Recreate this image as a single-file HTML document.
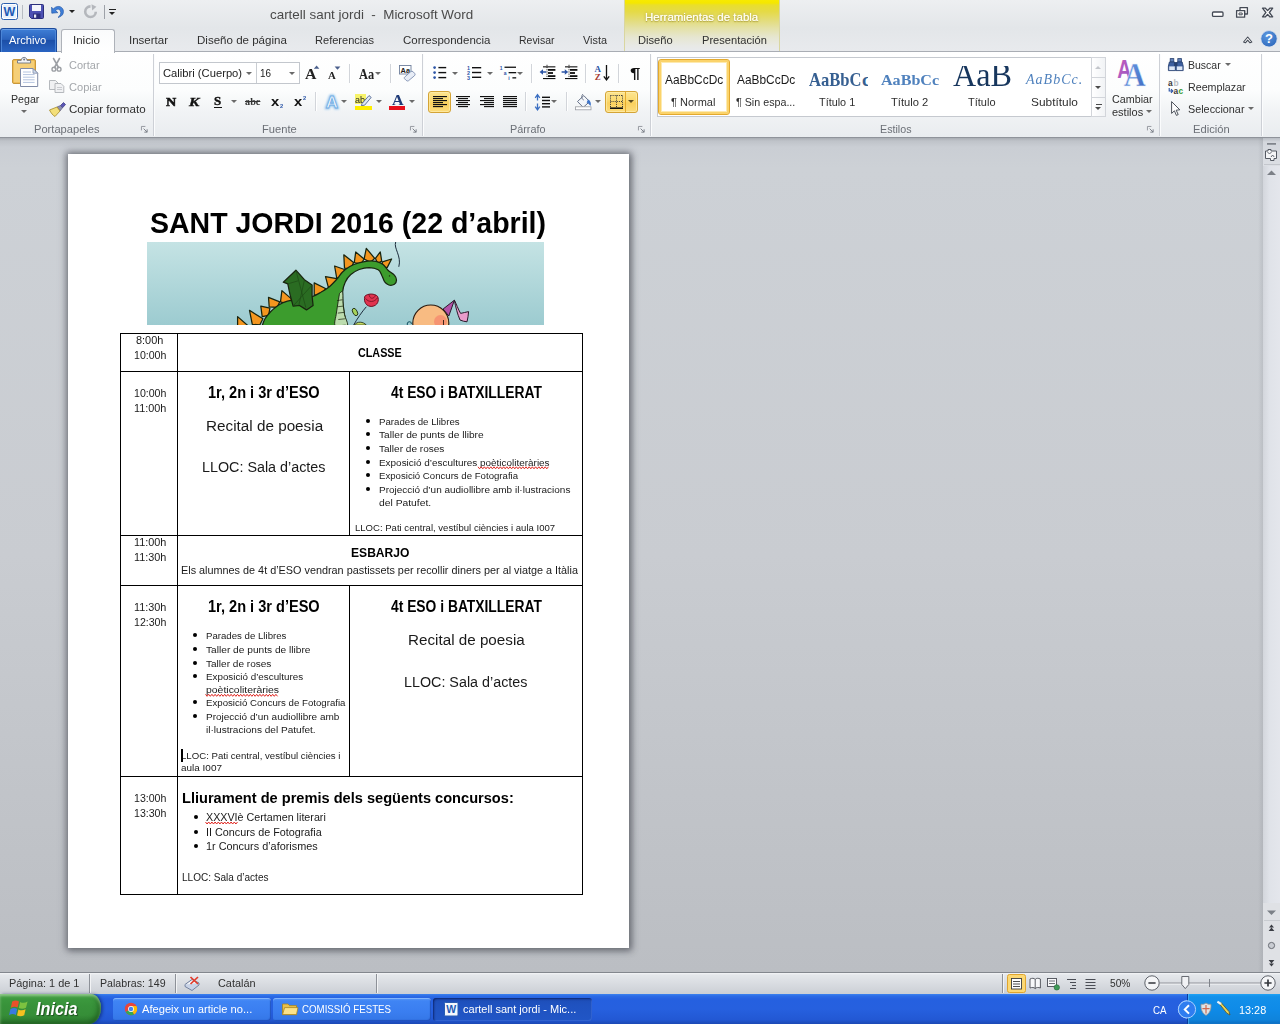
<!DOCTYPE html>
<html lang="ca">
<head>
<meta charset="utf-8">
<title>cartell sant jordi - Microsoft Word</title>
<style>
*{box-sizing:border-box;margin:0;padding:0}
html,body{width:1280px;height:1024px;overflow:hidden;background:#c5c9cf;font-family:"Liberation Sans",sans-serif;}
#root{position:absolute;left:0;top:0;width:1280px;height:1024px;overflow:hidden}
.a{position:absolute}
.t{position:absolute;display:block;white-space:nowrap;line-height:1;color:#3a3a3a;transform-origin:0 50%}
svg{position:absolute;overflow:visible}
.vs{position:absolute;width:2px;background:linear-gradient(90deg,#d2d5da 0,#d2d5da 50%,#fff 50%)}
.gs{position:absolute;top:54px;width:2px;height:82px;background:linear-gradient(90deg,#cdd0d6 0,#cdd0d6 50%,#fbfcfd 50%)}
.dd{position:absolute;width:0;height:0;border-left:3.4px solid transparent;border-right:3.4px solid transparent;border-top:3.6px solid #6a6a6a;margin-left:-.4px}
.dl{position:absolute;width:7px;height:7px}
.hl{position:absolute;border:1px solid #d4a436;border-radius:3px;background:linear-gradient(#fde590 0,#fbd96e 45%,#fad05e 55%,#fcdc7c 100%);box-shadow:inset 0 0 0 1px rgba(255,240,180,.6)}
#titlebar{left:0;top:0;width:1280px;height:28px;background:linear-gradient(#edeff1,#e3e6e9)}
#tabrow{left:0;top:28px;width:1280px;height:23px;background:linear-gradient(#e3e6e9,#e8eaed)}
#ribbon{left:0;top:51px;width:1280px;height:87px;background:linear-gradient(#ffffff 0,#fcfdfd 45%,#f1f3f5 70%,#e9ecef 100%);border-top:1px solid #a9adb4;border-bottom:1px solid #8f939a}
#docarea{left:0;top:138px;width:1263px;height:834px;background:linear-gradient(#a9adb3 0,#bfc3c9 3px,#caced4 9px,#cdd1d6 30px,#c9ccd1 50%,#bbbec3 100%)}
#page{left:68px;top:154px;width:561px;height:794px;background:#fff;box-shadow:0 0 7px 2px rgba(72,76,86,.62),2px 2px 6px 1px rgba(90,92,100,.4)}
.ln{position:absolute;background:#000}
.d{color:#000}
.bu{position:absolute;width:4px;height:4px;border-radius:50%;background:#000}
</style>
</head>
<body>
<div id="root">

<div id="ribbon" class="a"></div>
<div class="gs" style="left:153px"></div>
<div class="gs" style="left:422px"></div>
<div class="gs" style="left:650px"></div>
<div class="gs" style="left:1158.5px"></div>
<div class="gs" style="left:1261px"></div>
<span class="t" style='left:33.80px;top:124px;font-size:11.8px;color:#6b6f76;transform:scaleX(0.9435);'>Portapapeles</span>
<span class="t" style='left:261.60px;top:124px;font-size:11.8px;color:#6b6f76;transform:scaleX(0.9450);'>Fuente</span>
<span class="t" style='left:509.75px;top:124px;font-size:11.8px;color:#6b6f76;transform:scaleX(0.9179);'>Párrafo</span>
<span class="t" style='left:879.75px;top:124px;font-size:11.8px;color:#6b6f76;transform:scaleX(0.9065);'>Estilos</span>
<span class="t" style='left:1192.75px;top:124px;font-size:11.8px;color:#6b6f76;transform:scaleX(0.9473);'>Edición</span>
<svg class="dl" style="left:141px;top:126px" width="8" height="8" viewBox="0 0 8 8"><path d="M.5 5 V.5 H5" fill="none" stroke="#8b8f96"/><path d="M3 3 L7 7 M7 3.8 V7 H3.8" fill="none" stroke="#7a7e86" stroke-width="1.1"/></svg>
<svg class="dl" style="left:410px;top:126px" width="8" height="8" viewBox="0 0 8 8"><path d="M.5 5 V.5 H5" fill="none" stroke="#8b8f96"/><path d="M3 3 L7 7 M7 3.8 V7 H3.8" fill="none" stroke="#7a7e86" stroke-width="1.1"/></svg>
<svg class="dl" style="left:638px;top:126px" width="8" height="8" viewBox="0 0 8 8"><path d="M.5 5 V.5 H5" fill="none" stroke="#8b8f96"/><path d="M3 3 L7 7 M7 3.8 V7 H3.8" fill="none" stroke="#7a7e86" stroke-width="1.1"/></svg>
<svg class="dl" style="left:1147px;top:126px" width="8" height="8" viewBox="0 0 8 8"><path d="M.5 5 V.5 H5" fill="none" stroke="#8b8f96"/><path d="M3 3 L7 7 M7 3.8 V7 H3.8" fill="none" stroke="#7a7e86" stroke-width="1.1"/></svg>
<svg style="left:0;top:0" width="160" height="140" viewBox="0 0 160 140">
<rect x="12.5" y="59.5" width="23" height="24" rx="1.5" fill="#f0bd55" stroke="#c8983c"/>
<rect x="14" y="61" width="20" height="21" fill="#f5cf78"/>
<path d="M17.5 63 V60.4 H21.2 C21.2 56.4 27 56.4 27 60.4 H30.6 V63Z" fill="#f1f3f6" stroke="#6f7682" stroke-width=".9"/>
<circle cx="24.1" cy="59.6" r="1" fill="#6f7682"/>
<path d="M20.5 68.5 H33 L37.7 73.2 V86.5 H20.5Z" fill="#fff" stroke="#7f8aa6"/>
<path d="M33 68.5 V73.2 H37.7Z" fill="#cfdcf0" stroke="#7f8aa6" stroke-width=".8"/>
<g stroke="#b4c4df" stroke-width="1"><path d="M23 72H31M23 74.6H34.6M23 77.2H34.6M23 79.8H34.6M23 82.4H34.6"/></g>
<g stroke="#9c9fa4" stroke-width="1.7" fill="none" stroke-linecap="round"><path d="M53.6 58.6 L58.6 67.6 M59.4 58.6 L54.4 67.6"/><circle cx="53.9" cy="69.2" r="1.9" stroke-width="1.4"/><circle cx="59.1" cy="69.2" r="1.9" stroke-width="1.4"/></g>
<g fill="#f0f1f3" stroke="#aeb1b6" stroke-width=".9"><path d="M49.5 80.5 H55.5 L58 83 V89.5 H49.5Z"/><path d="M55 83.5 H61 L63.8 86.3 V92.5 H55Z"/></g>
<g stroke="#bfc2c6" stroke-width=".8"><path d="M57 87.5H62M57 89.5H62"/></g>
<path d="M60.5 105.5 L63.5 102.5 L65.5 104.5 L62.5 107.8Z" fill="#5a55b5" stroke="#34307c" stroke-width=".7"/>
<path d="M57 107 L60.5 105.5 L62.5 107.8 L60 111Z" fill="#8d8fb2" stroke="#4b4b78" stroke-width=".6"/>
<path d="M49.5 110 L57 107 L60 111 L55 116.5 C53 115.5 51 113 49.5 110Z" fill="#f3df7a" stroke="#a48a28" stroke-width=".8"/>
</svg>
<span class="t" style='left:10.60px;top:94px;font-size:11.8px;color:#2f2f2f;transform:scaleX(0.9014);'>Pegar</span>
<div class="dd" style="left:21.4px;top:109.5px"></div>
<span class="t" style='left:68.80px;top:60px;font-size:11.8px;color:#a4a7ab;transform:scaleX(0.9328);'>Cortar</span>
<span class="t" style='left:68.80px;top:82px;font-size:11.8px;color:#a4a7ab;transform:scaleX(0.9400);'>Copiar</span>
<span class="t" style='left:68.80px;top:104px;font-size:11.8px;color:#2f2f2f;transform:scaleX(0.9818);'>Copiar formato</span>
<div class="a" style="left:159px;top:62px;width:141px;height:22px;background:#fff;border:1px solid #c3c7cd"></div><div class="a" style="left:256px;top:63px;width:1px;height:20px;background:#c9cdd2"></div>
<span class="t" style='left:162.50px;top:68px;font-size:11.8px;color:#222;transform:scaleX(0.9497);'>Calibri (Cuerpo)</span>
<span class="t" style='left:260.00px;top:68px;font-size:11.8px;color:#222;transform:scaleX(0.8390);'>16</span>
<div class="dd" style="left:246.6px;top:71.5px"></div><div class="dd" style="left:289.5px;top:71.5px"></div>
<span class="t" style='left:305.00px;top:66px;font-size:15.5px;font-family:"Liberation Serif",serif;font-weight:bold;color:#222;transform:scaleX(1.0207);'>A</span>
<span class="t" style='left:328.00px;top:71px;font-size:10.5px;font-family:"Liberation Serif",serif;font-weight:bold;color:#222;transform:scaleX(1.0303);'>A</span>
<svg style="left:0;top:0" width="1" height="1"><path d="M313.8 68.8 L316.6 65.6 L319.4 68.8Z" fill="#4a5f8c"/><path d="M334.6 66.6 L340.4 66.6 L337.5 69.8Z" fill="#4a5f8c"/></svg>
<div class="vs" style="left:349px;top:64px;height:19px"></div><div class="vs" style="left:390px;top:64px;height:19px"></div>
<span class="t" style='left:358.50px;top:67px;font-size:14.5px;font-family:"Liberation Serif",serif;font-weight:bold;color:#222;transform:scaleX(0.8515);'>Aa</span>
<div class="dd" style="left:375.5px;top:71.5px"></div>
<svg style="left:0;top:0" width="1" height="1"><rect x="399.5" y="65.5" width="11.5" height="8.5" fill="#fff" stroke="#6f7f9c" stroke-width=".9"/><text x="405.3" y="72.6" font-size="7.4" font-weight="bold" text-anchor="middle" font-family="Liberation Sans,sans-serif" fill="#1c1c1c">Aa</text><path d="M404.6 77.2 L410.8 71.6 Q412 70.6 413.2 71.8 L414.8 73.6 Q415.6 74.8 414.4 75.8 L408.4 80.8 Q407.2 81.4 406.2 80.4 L404.4 78.6 Q403.8 77.8 404.6 77.2Z" fill="#e8edf6" stroke="#7d8db0" stroke-width=".9"/></svg>
<span class="t" style='left:166.00px;top:96px;font-size:12.4px;font-family:"Liberation Serif",serif;font-weight:bold;color:#111;-webkit-text-stroke:.5px #111;transform:scaleX(1.1427);'>N</span>
<span class="t" style='left:188.76px;top:96px;font-size:12.4px;font-family:"Liberation Serif",serif;font-weight:bold;font-style:italic;color:#111;-webkit-text-stroke:.4px #111;transform:scaleX(1.2516);'>K</span>
<span class="t" style='left:214.20px;top:95px;font-size:12.4px;font-family:"Liberation Serif",serif;font-weight:bold;color:#111;-webkit-text-stroke:.4px #111;transform:scaleX(1.0447);'>S</span>
<div class="a" style="left:214px;top:106.9px;width:7.6px;height:1.2px;background:#111"></div>
<div class="dd" style="left:231.4px;top:100px"></div>
<span class="t" style='left:245.20px;top:96px;font-size:11.2px;font-family:"Liberation Serif",serif;font-weight:bold;color:#333;text-decoration:line-through;transform:scaleX(0.9170);'>abc</span>
<span class="t" style='left:271.00px;top:95px;font-size:13px;font-weight:bold;color:#111;transform:scaleX(1.1359);'>x</span>
<span class="t" style='left:280.00px;top:104px;font-size:5.6px;font-weight:bold;color:#2b56a8;transform:scaleX(1.0262);'>2</span>
<span class="t" style='left:293.60px;top:95px;font-size:13px;font-weight:bold;color:#111;transform:scaleX(1.1359);'>x</span>
<span class="t" style='left:302.60px;top:96px;font-size:5.6px;font-weight:bold;color:#2b56a8;transform:scaleX(1.0262);'>2</span>
<div class="vs" style="left:315px;top:92px;height:19px"></div>
<svg style="left:0;top:0" width="1" height="1"><defs><filter id="gl" x="-50%" y="-50%" width="200%" height="200%"><feGaussianBlur stdDeviation="1.1"/></filter></defs>
<text x="332" y="107.6" font-size="17" font-weight="bold" text-anchor="middle" font-family="Liberation Sans,sans-serif" fill="#8ec2ee" stroke="#8ec2ee" stroke-width="2.4" filter="url(#gl)">A</text>
<text x="332" y="107.6" font-size="17" font-weight="bold" text-anchor="middle" font-family="Liberation Sans,sans-serif" fill="#f6fbff" stroke="#74aee4" stroke-width=".9">A</text></svg>
<div class="dd" style="left:341.4px;top:100px"></div>
<div class="a" style="left:355px;top:94px;width:10.5px;height:10px;background:#f7f36a"></div>
<span class="t" style='left:355.20px;top:95px;font-size:9.6px;color:#222;transform:scaleX(0.9380);'>ab</span>
<svg style="left:0;top:0" width="1" height="1"><path d="M362 103.6 L369 95.6 L371.2 97.4 L364.6 105.2 L361.4 105.6Z" fill="#dfe9f7" stroke="#3f5684" stroke-width=".8"/></svg>
<div class="a" style="left:355px;top:106.2px;width:16.6px;height:3.6px;background:#ffee00"></div>
<div class="dd" style="left:376.4px;top:100px"></div>
<span class="t" style='left:392.00px;top:93px;font-size:14.6px;font-family:"Liberation Serif",serif;font-weight:bold;color:#1f3b78;transform:scaleX(1.1032);'>A</span>
<div class="a" style="left:389px;top:106.2px;width:16.4px;height:3.6px;background:#e8101c"></div>
<div class="dd" style="left:409.5px;top:100px"></div>
<div class="hl" style="left:428px;top:91px;width:23px;height:22px"></div>
<div class="hl" style="left:605px;top:91px;width:33px;height:22px"></div><div class="a" style="left:625.4px;top:92px;width:1px;height:20px;background:#e5ab2c"></div>
<svg style="left:0;top:0" width="1" height="1"><circle cx="434.6" cy="67.6" r="1.35" fill="#2d55a6"/><rect x="438.4" y="66.89999999999999" width="7.8" height="1.4" fill="#111"/><circle cx="434.6" cy="72.6" r="1.35" fill="#2d55a6"/><rect x="438.4" y="71.89999999999999" width="7.8" height="1.4" fill="#111"/><circle cx="434.6" cy="77.6" r="1.35" fill="#2d55a6"/><rect x="438.4" y="76.89999999999999" width="7.8" height="1.4" fill="#111"/><text x="468.6" y="70.0" font-size="5.4" font-weight="bold" text-anchor="middle" font-family="Liberation Sans,sans-serif" fill="#2d55a6">1</text><rect x="472" y="67.0" width="9.2" height="1.4" fill="#111"/><text x="468.6" y="74.8" font-size="5.4" font-weight="bold" text-anchor="middle" font-family="Liberation Sans,sans-serif" fill="#2d55a6">2</text><rect x="472" y="71.8" width="9.2" height="1.4" fill="#111"/><text x="468.6" y="79.6" font-size="5.4" font-weight="bold" text-anchor="middle" font-family="Liberation Sans,sans-serif" fill="#2d55a6">3</text><rect x="472" y="76.6" width="9.2" height="1.4" fill="#111"/><text x="501.2" y="70" font-size="5" font-weight="bold" text-anchor="middle" font-family="Liberation Sans,sans-serif" fill="#2d55a6">1</text><rect x="504.5" y="66.6" width="11.5" height="1.3" fill="#111"/><text x="505.2" y="75.2" font-size="5" font-weight="bold" text-anchor="middle" font-family="Liberation Sans,sans-serif" fill="#2d55a6">a</text><rect x="508.6" y="72" width="7.6" height="1.3" fill="#111"/><text x="509" y="80.4" font-size="5" font-weight="bold" text-anchor="middle" font-family="Liberation Sans,sans-serif" fill="#2d55a6">i</text><rect x="512.4" y="77.2" width="3.8" height="1.3" fill="#111"/><rect x="543.0" y="66.3" width="12.4" height="1.1" fill="#111"/><rect x="543.0" y="78.0" width="12.4" height="1.1" fill="#111"/><rect x="548.0" y="69.0" width="7.4" height="1.8" fill="#111"/><rect x="548.0" y="72.1" width="5.0" height="1.8" fill="#111"/><rect x="548.0" y="75.2" width="7.4" height="1.8" fill="#111"/><path d="M547 64.8 V80" stroke="#111" stroke-width=".9" stroke-dasharray="1.1 1.1"/><path d="M539.6 72 L543 69.2 V71.2 H546.2 V72.8 H543 V74.8Z" fill="#2d55a6"/><rect x="565.0" y="66.3" width="12.4" height="1.1" fill="#111"/><rect x="565.0" y="78.0" width="12.4" height="1.1" fill="#111"/><rect x="570.0" y="69.0" width="7.4" height="1.8" fill="#111"/><rect x="570.0" y="72.1" width="5.0" height="1.8" fill="#111"/><rect x="570.0" y="75.2" width="7.4" height="1.8" fill="#111"/><path d="M569 64.8 V80" stroke="#111" stroke-width=".9" stroke-dasharray="1.1 1.1"/><path d="M568.2 72 L564.8 69.2 V71.2 H561.6 V72.8 H564.8 V74.8Z" fill="#2d55a6"/><text x="597.8" y="72" font-size="9" font-weight="bold" text-anchor="middle" font-family="Liberation Serif,serif" fill="#2d55a6">A</text><text x="597.8" y="80.2" font-size="9" font-weight="bold" text-anchor="middle" font-family="Liberation Serif,serif" fill="#a63a32">Z</text><path d="M606.5 65 V78.5 M603.8 76.4 L606.5 80 L609.2 76.4" fill="none" stroke="#111" stroke-width="1.3"/><rect x="433.0" y="96.0" width="14.0" height="1.15" fill="#111"/><rect x="433.0" y="98.0" width="10.0" height="1.15" fill="#111"/><rect x="433.0" y="100.0" width="14.0" height="1.15" fill="#111"/><rect x="433.0" y="102.0" width="10.0" height="1.15" fill="#111"/><rect x="433.0" y="104.0" width="14.0" height="1.15" fill="#111"/><rect x="433.0" y="106.0" width="10.0" height="1.15" fill="#111"/><rect x="456.0" y="96.0" width="14.0" height="1.15" fill="#111"/><rect x="458.0" y="98.0" width="10.0" height="1.15" fill="#111"/><rect x="456.0" y="100.0" width="14.0" height="1.15" fill="#111"/><rect x="458.0" y="102.0" width="10.0" height="1.15" fill="#111"/><rect x="456.0" y="104.0" width="14.0" height="1.15" fill="#111"/><rect x="458.0" y="106.0" width="10.0" height="1.15" fill="#111"/><rect x="480.0" y="96.0" width="14.0" height="1.15" fill="#111"/><rect x="484.0" y="98.0" width="10.0" height="1.15" fill="#111"/><rect x="480.0" y="100.0" width="14.0" height="1.15" fill="#111"/><rect x="484.0" y="102.0" width="10.0" height="1.15" fill="#111"/><rect x="480.0" y="104.0" width="14.0" height="1.15" fill="#111"/><rect x="484.0" y="106.0" width="10.0" height="1.15" fill="#111"/><rect x="503.0" y="96.0" width="14.0" height="1.15" fill="#111"/><rect x="503.0" y="98.0" width="14.0" height="1.15" fill="#111"/><rect x="503.0" y="100.0" width="14.0" height="1.15" fill="#111"/><rect x="503.0" y="102.0" width="14.0" height="1.15" fill="#111"/><rect x="503.0" y="104.0" width="14.0" height="1.15" fill="#111"/><rect x="503.0" y="106.0" width="14.0" height="1.15" fill="#111"/><path d="M537.5 95.4 V100.6 M535.2 97.8 L537.5 94.6 L539.8 97.8 M537.5 103.6 V109 M535.2 106.6 L537.5 109.8 L539.8 106.6" fill="none" stroke="#3b6fc2" stroke-width="1.3"/><rect x="542.0" y="96.6" width="8.0" height="1.4" fill="#111"/><rect x="542.0" y="99.8" width="8.0" height="1.4" fill="#111"/><rect x="542.0" y="103.0" width="8.0" height="1.4" fill="#111"/><rect x="542.0" y="106.2" width="8.0" height="1.4" fill="#111"/><path d="M577.5 101.5 L583.8 95.6 L589.6 101.6 L583.2 107.4Z" fill="#f3f6fa" stroke="#57627a" stroke-width=".9"/><path d="M583 94 C581 96 581.6 99 583.6 100" fill="none" stroke="#57627a" stroke-width=".9"/><path d="M588 99.6 C590.6 100.6 591.4 103.6 590.6 106 C589.4 104.6 588.2 103 586.6 102.4Z" fill="#3f74c9"/><rect x="575.5" y="106.8" width="15.5" height="3" fill="#fff" stroke="#9a9da3" stroke-width=".8"/></svg>
<div class="dd" style="left:452.6px;top:71.5px"></div>
<div class="dd" style="left:487.6px;top:71.5px"></div>
<div class="dd" style="left:517.6px;top:71.5px"></div>
<div class="vs" style="left:531px;top:64px;height:19px"></div><div class="vs" style="left:585px;top:64px;height:19px"></div><div class="vs" style="left:618px;top:64px;height:19px"></div>
<div class="vs" style="left:525px;top:92px;height:19px"></div><div class="vs" style="left:566px;top:92px;height:19px"></div>
<div class="dd" style="left:551.4px;top:100px"></div><div class="dd" style="left:595.5px;top:100px"></div><div class="dd" style="left:628.3px;top:100px;border-top-color:#5a4a20"></div>
<span class="t" style='left:630.00px;top:66px;font-size:14px;font-weight:bold;color:#111;transform:scaleX(1.3367);'>¶</span>
<svg style="left:0;top:0" width="1" height="1"><g stroke="#3a3a3a" stroke-width="1" stroke-dasharray="1 1.1" fill="none"><path d="M610.5 95.5 H622.5 M610.5 101.5 H622.5 M610.5 95.5 V107 M616.5 95.5 V107 M622.5 95.5 V107"/></g><rect x="610" y="107.4" width="13" height="1.6" fill="#111"/></svg>
<div class="a" style="left:657px;top:57px;width:449px;height:59.5px;background:#fff;border:1px solid #c5c9cf"></div>
<div class="a" style="left:658px;top:59px;width:72px;height:56px;border:1px solid #e3a92e;border-radius:3px;background:#fff;box-shadow:inset 0 0 0 2px #fbd36b,inset 0 0 0 3px #fdeab0"></div>
<span class="t" style='left:665.00px;top:74px;font-size:12.6px;color:#1a1a1a;overflow:hidden;transform:scaleX(0.9449);'>AaBbCcDc</span>
<span class="t" style='left:736.90px;top:74px;font-size:12.6px;color:#1a1a1a;transform:scaleX(0.9449);'>AaBbCcDc</span>
<span class="t" style='left:671.25px;top:97px;font-size:11.8px;color:#2f2f2f;transform:scaleX(0.9314);'>¶ Normal</span>
<span class="t" style='left:736.25px;top:97px;font-size:11.8px;color:#2f2f2f;transform:scaleX(0.9077);'>¶ Sin espa...</span>
<span class="t" style='left:809.00px;top:70px;font-size:19px;font-family:"Liberation Serif",serif;font-weight:bold;color:#365f91;transform:scaleX(0.8729);'>AaBbC</span>
<div class="a" style="left:862px;top:72px;width:6px;height:16px;overflow:hidden"><span class="t" style='left:0;top:-2.3px;font-size:19px;font-family:"Liberation Serif",serif;font-weight:bold;color:#365f91'>c</span></div>
<span class="t" style='left:819.40px;top:97px;font-size:11.8px;color:#2f2f2f;transform:scaleX(0.9204);'>Título 1</span>
<span class="t" style='left:881.00px;top:73px;font-size:14.8px;font-family:"Liberation Serif",serif;font-weight:bold;color:#4f81bd;transform:scaleX(1.0869);'>AaBbCc</span>
<span class="t" style='left:891.25px;top:97px;font-size:11.8px;color:#2f2f2f;transform:scaleX(0.9471);'>Título 2</span>
<div class="a" style="left:950px;top:66px;width:64px;height:24px;overflow:hidden"><span class="t" style='left:3.1px;top:-8px;font-size:34px;font-family:"Liberation Serif",serif;color:#17365d;transform:scaleX(0.946)'>AaB</span></div>
<span class="t" style='left:967.50px;top:97px;font-size:11.8px;color:#2f2f2f;transform:scaleX(0.9321);'>Título</span>
<span class="t" style='left:1025.77px;top:73px;font-size:13.6px;font-family:"Liberation Serif",serif;font-style:italic;color:#4f81bd;letter-spacing:1px;transform:scaleX(1.0292);'>AaBbCc.</span>
<span class="t" style='left:1030.60px;top:97px;font-size:11.8px;color:#2f2f2f;transform:scaleX(1.0072);'>Subtítulo</span>
<div class="a" style="left:1091px;top:57px;width:15px;height:59.5px;border:1px solid #d2d5da;background:linear-gradient(90deg,#fff,#f1f3f5)"></div><div class="a" style="left:1092px;top:77px;width:13px;height:1px;background:#d2d5da"></div><div class="a" style="left:1092px;top:96.5px;width:13px;height:1px;background:#d2d5da"></div>
<div class="dd" style="left:1095.5px;top:65.5px;border-top:none;border-bottom:3px solid #c3c6cb"></div><div class="dd" style="left:1095.5px;top:85.5px;border-top-color:#4a4a4a"></div><div class="a" style="left:1095.5px;top:103.6px;width:6px;height:1.2px;background:#4a4a4a"></div><div class="dd" style="left:1095.5px;top:106.5px;border-top-color:#4a4a4a"></div>
<svg style="left:0;top:0" width="1" height="1"><defs><linearGradient id="pa" x1="0" y1="0" x2="1" y2="1"><stop offset="0" stop-color="#d05ab8"/><stop offset="1" stop-color="#8c5ac8"/></linearGradient><linearGradient id="ba" x1="0" y1="0" x2="1" y2="1"><stop offset="0" stop-color="#6fa0e8"/><stop offset="1" stop-color="#3c68c0"/></linearGradient></defs>
<text x="1124.2" y="77.6" font-size="25" font-weight="bold" text-anchor="middle" font-family="Liberation Sans,sans-serif" fill="url(#pa)" transform="translate(1124.2 0) scale(.78 1) translate(-1124.2 0)">A</text>
<text x="1134.8" y="85.6" font-size="33" text-anchor="middle" font-family="Liberation Serif,serif" font-weight="bold" fill="url(#ba)" stroke="#e8eefa" stroke-width=".5" transform="translate(1134.8 0) scale(.92 1) translate(-1134.8 0)">A</text></svg>
<span class="t" style='left:1111.90px;top:94px;font-size:11.8px;color:#2f2f2f;transform:scaleX(0.9100);'>Cambiar</span>
<span class="t" style='left:1111.90px;top:107px;font-size:11.8px;color:#2f2f2f;transform:scaleX(0.9326);'>estilos</span>
<div class="dd" style="left:1146.4px;top:109.5px"></div>
<svg style="left:0;top:0" width="1" height="1">
<g stroke="#27406e" stroke-width=".8"><rect x="1170.2" y="58.6" width="3.6" height="3.4" fill="#5f7fb8"/><rect x="1177.8" y="58.6" width="3.6" height="3.4" fill="#5f7fb8"/><path d="M1169.4 62 H1174.6 L1175.6 66 V70.6 H1168.4 V66Z" fill="#3d5f9f"/><path d="M1177 62 H1182.2 L1183.2 66 V70.6 H1176 V66Z" fill="#3d5f9f"/><rect x="1174.6" y="62.6" width="2.4" height="3" fill="#27406e"/></g>
<rect x="1169.2" y="66.4" width="5.6" height="3.6" fill="#dfe8f6"/><rect x="1176.8" y="66.4" width="5.6" height="3.6" fill="#dfe8f6"/>
<text x="1168" y="86.4" font-size="8.4" font-weight="bold" font-family="Liberation Sans,sans-serif" fill="#3a3a3a">a</text><text x="1173.4" y="86" font-size="8.4" font-weight="bold" font-family="Liberation Sans,sans-serif" fill="#b8bcc2">b</text>
<text x="1173.6" y="94" font-size="8.4" font-weight="bold" font-family="Liberation Sans,sans-serif" fill="#3a3a3a">a</text><text x="1178.6" y="94" font-size="8.4" font-weight="bold" font-family="Liberation Sans,sans-serif" fill="#3a9a34">c</text>
<path d="M1169.2 88 V91 H1172.6 M1171 89.2 L1172.8 91 L1171 92.8" fill="none" stroke="#2d55a6" stroke-width="1.1"/>
<path d="M1171.6 101.6 V113.4 L1174.4 110.8 L1176.4 115.4 L1178.2 114.6 L1176.2 110.2 L1179.8 109.8Z" fill="#fff" stroke="#3a3f4a" stroke-width=".9" stroke-linejoin="round"/></svg>
<span class="t" style='left:1187.90px;top:60px;font-size:11.8px;color:#2f2f2f;transform:scaleX(0.8900);'>Buscar</span>
<span class="t" style='left:1187.90px;top:82px;font-size:11.8px;color:#2f2f2f;transform:scaleX(0.9068);'>Reemplazar</span>
<span class="t" style='left:1187.90px;top:104px;font-size:11.8px;color:#2f2f2f;transform:scaleX(0.9163);'>Seleccionar</span>
<div class="dd" style="left:1225.5px;top:63px"></div><div class="dd" style="left:1248.3px;top:107px"></div>
<div id="titlebar" class="a"></div>
<div id="tabrow" class="a"></div>
<div class="a" style="left:624px;top:0;width:156px;height:51px;background:linear-gradient(#f8ea00 0,#f5e700 3px,#e9de2c 5px,#e5da48 12px,#e3dc78 20px,#e4e1a6 28px,#e6e6d0 37px,#e8e9e6 46px,#e8eaed 51px);border-left:1px solid #d9d6a0;border-right:1px solid #d9d6a0"></div>
<span class="t" style='left:645.30px;top:12px;font-size:11.8px;color:#fffef0;text-shadow:0 0 1px #fff,0 0 3px #a89a20,0 1px 1px #a89a30;transform:scaleX(0.9758);'>Herramientas de tabla</span>
<svg style="left:1px;top:3px" width="17" height="17" viewBox="0 0 17 17"><rect x=".5" y=".5" width="16" height="16" rx="2" fill="#fff" stroke="#2b5fae"/><rect x="2" y="2" width="13" height="13" fill="#e8f0fb"/><text x="8.5" y="13.3" text-anchor="middle" font-family="Liberation Sans,sans-serif" font-weight="bold" font-size="12.5" fill="#1f5bb5">W</text></svg>
<div class="a" style="left:22px;top:5px;width:1px;height:14px;background:#b8bcc2"></div>
<svg style="left:29px;top:4px" width="15" height="15" viewBox="0 0 15 15"><path d="M0.5 1.5 Q0.5 .5 1.5 .5 H13.5 Q14.5 .5 14.5 1.5 V13.5 Q14.5 14.5 13.5 14.5 H2.5 L.5 12.5Z" fill="#4d51b3" stroke="#2c2f7c"/><rect x="3" y="1" width="9" height="6" fill="#f4f5fb"/><rect x="4" y="9.5" width="7.5" height="5" fill="#2c2f7c"/><rect x="5" y="10.5" width="2.2" height="3.2" fill="#e8e9f6"/></svg>
<svg style="left:51px;top:4px" width="15" height="15" viewBox="0 0 15 15"><path d="M2.2 5.2 C5 1.2 11 1.6 12.2 6 C13.2 10 10.5 12.8 7 13.4 C9.6 11.6 10.4 9 9.4 6.8 C8.4 4.8 6 4.6 4.6 6.6 L6.8 8.6 L.8 9.2 L.6 3.2Z" fill="#3f7fd9" stroke="#2358a8" stroke-width=".7"/></svg>
<div class="dd" style="left:69.5px;top:9.5px;border-top-color:#222"></div>
<svg style="left:83px;top:4px" width="15" height="15" viewBox="0 0 15 15"><path d="M7.5 2.4 A5.3 5.3 0 1 0 12.8 7.7" fill="none" stroke="#b4b7bc" stroke-width="2.6"/><path d="M8.5 .2 L13.4 2.8 L9.2 6.4Z" fill="#b4b7bc"/></svg>
<div class="a" style="left:104px;top:5px;width:1px;height:14px;background:#9da1a8"></div>
<div class="a" style="left:109px;top:9px;width:7px;height:1.4px;background:#222"></div><div class="dd" style="left:109.5px;top:12px;border-top-color:#222"></div>
<span class="t" style='left:269.70px;top:8px;font-size:13px;color:#4a4a4a;transform:scaleX(1.0311);'>cartell sant jordi&nbsp; -&nbsp; Microsoft Word</span>
<svg style="left:1208px;top:4px" width="70" height="18" viewBox="1208 4 70 18" fill="#fff" stroke="#444a55" stroke-width="1.3" stroke-linejoin="round">
<rect x="1212.5" y="12" width="10.5" height="4.4" rx="1"/>
<path d="M1240 7.6 H1247.4 V14 H1244.6 V10.6 H1240Z"/><rect x="1236.6" y="10.6" width="8" height="6.6" /><rect x="1239" y="13" width="3.2" height="1.8" stroke-width="1"/>
<path d="M1262.5 8.2 H1265.4 L1267.6 10.6 L1269.8 8.2 H1272.7 L1269.3 12.5 L1272.7 16.8 H1269.8 L1267.6 14.4 L1265.4 16.8 H1262.5 L1265.9 12.5Z"/>
<path d="M1243.6 42 L1247.7 37 L1251.8 42 L1250 42.8 L1247.7 40.2 L1245.4 42.8Z" stroke-width="1.1"/>
</svg>
<svg style="left:1260px;top:30px" width="18" height="18" viewBox="0 0 18 18"><defs><radialGradient id="hg" cx=".4" cy=".3" r=".8"><stop offset="0" stop-color="#5c98e0"/><stop offset="1" stop-color="#2c66ba"/></radialGradient></defs><circle cx="9" cy="8.8" r="8.2" fill="url(#hg)" stroke="#dfe6f0" stroke-width=".8"/><text x="9" y="13.4" text-anchor="middle" font-family="Liberation Sans,sans-serif" font-weight="bold" font-size="13" fill="#fff">?</text></svg>
<div class="a" style="left:0;top:28px;width:57px;height:24px;border:1px solid #1b4a9c;border-bottom:none;border-radius:3px 3px 0 0;background:linear-gradient(#3f7fd6 0,#2a62bd 45%,#1c4fa8 50%,#2a64c2 100%);box-shadow:inset 0 1px 0 #6ea2e8,inset 1px 0 0 #4a84d6,inset -1px 0 0 #4a84d6"></div>
<span class="t" style='left:9.40px;top:35px;font-size:11.8px;color:#fff;transform:scaleX(0.9458);'>Archivo</span>
<div class="a" style="left:60.6px;top:29px;width:54px;height:24px;border:1px solid #aeb2b9;border-bottom:none;border-radius:3px 3px 0 0;background:linear-gradient(#fafbfc,#fff)"></div>
<span class="t" style='left:73.10px;top:35px;font-size:11.8px;color:#303030;transform:scaleX(0.9770);'>Inicio</span>
<span class="t" style='left:128.75px;top:35px;font-size:11.8px;color:#303030;transform:scaleX(0.9757);'>Insertar</span>
<span class="t" style='left:196.70px;top:35px;font-size:11.8px;color:#303030;transform:scaleX(0.9785);'>Diseño de página</span>
<span class="t" style='left:315.00px;top:35px;font-size:11.8px;color:#303030;transform:scaleX(0.9372);'>Referencias</span>
<span class="t" style='left:402.50px;top:35px;font-size:11.8px;color:#303030;transform:scaleX(0.9734);'>Correspondencia</span>
<span class="t" style='left:518.50px;top:35px;font-size:11.8px;color:#303030;transform:scaleX(0.8870);'>Revisar</span>
<span class="t" style='left:582.50px;top:35px;font-size:11.8px;color:#303030;transform:scaleX(0.9209);'>Vista</span>
<span class="t" style='left:637.50px;top:35px;font-size:11.8px;color:#303030;transform:scaleX(0.9450);'>Diseño</span>
<span class="t" style='left:701.60px;top:35px;font-size:11.8px;color:#303030;transform:scaleX(0.9412);'>Presentación</span>
<div id="docarea" class="a"></div>
<div id="page" class="a"></div>
<span class="t" style='left:150.40px;top:208px;font-size:30px;font-weight:bold;color:#000;transform:scaleX(0.9500);'>SANT JORDI 2016 (22 d’abril)</span>
<svg style="left:147px;top:242px;overflow:hidden" width="397" height="83" viewBox="147 242 397 83">
<defs><linearGradient id="sky" x1="0" y1="0" x2="0" y2="1"><stop offset="0" stop-color="#c5e3e4"/><stop offset="1" stop-color="#9ccbd0"/></linearGradient></defs>
<rect x="147" y="242" width="397" height="83" fill="url(#sky)"/>
<g stroke="#18240f" stroke-width="1.25" stroke-linejoin="round">
<g fill="#f4961f"><path d="M370.6 262.4 L364.1 259.0 L366.3 248.4 L374.7 258.3Z"/><path d="M377.7 263.5 L375.4 258.3 L380.3 252.0 L381.7 261.1Z"/><path d="M381.9 267.1 L382.4 261.8 L391.6 259.0 L387.3 267.4Z"/><path d="M360.7 264.4 L354.3 262.5 L355.7 252.0 L364.1 259.0Z"/><path d="M350.8 268.8 L344.5 268.1 L343.8 254.8 L353.6 262.5Z"/><path d="M343.0 276.9 L336.7 278.0 L334.6 266.0 L344.5 269.5Z"/><path d="M335.4 285.5 L328.3 287.1 L325.5 276.6 L336.7 278.7Z"/><path d="M322.0 295.0 L314.2 294.8 L314.2 282.9 L325.5 288.5Z"/><path d="M287.6 304.1 L280.5 301.9 L281.9 290.6 L291.7 299.1Z"/><path d="M277.1 307.3 L269.2 306.8 L268.5 297.4 L279.8 301.9Z"/><path d="M268.6 315.4 L262.2 316.6 L260.8 306.1 L269.9 308.2Z"/><path d="M259.9 324.8 L252.3 324.4 L249.5 310.3 L262.9 318.8Z"/><path d="M244.8 329.2 L237.6 325.8 L237.6 316.6 L248.1 325.8Z"/></g>
<path fill="#3c9c2d" d="M262.2 325.8 C262.7 324.6 263.6 321.1 265.0 318.8 C266.4 316.4 268.3 314.1 270.6 311.7 C273.0 309.4 276.3 306.4 279.1 304.7 C281.9 302.9 284.2 302.0 287.5 301.2 C290.8 300.4 294.5 300.6 298.8 299.8 C303.0 298.9 309.1 297.5 312.8 296.3 C316.6 295.0 318.4 293.7 321.3 292.0 C324.1 290.4 327.1 288.5 329.7 286.4 C332.3 284.3 334.6 281.7 336.7 279.4 C338.8 277.0 340.2 274.5 342.3 272.3 C344.5 270.2 346.8 268.2 349.4 266.7 C352.0 265.2 354.8 264.1 357.8 263.2 C360.9 262.3 364.6 261.4 367.7 261.1 C370.7 260.8 373.5 260.8 376.1 261.4 C378.7 262.0 381.1 263.1 383.1 264.6 C385.1 266.1 386.2 268.5 388.0 270.2 C389.9 272.0 393.0 273.5 394.4 275.2 C395.8 276.8 396.5 278.6 396.5 280.1 C396.5 281.6 395.7 283.5 394.4 284.3 C393.1 285.1 390.4 285.5 388.8 285.0 C387.1 284.5 385.7 283.1 384.5 281.5 C383.4 279.8 382.8 277.1 381.7 275.2 C380.7 273.2 380.3 271.1 378.2 269.8 C376.1 268.6 372.2 267.8 369.1 267.7 C365.9 267.7 362.3 268.4 359.2 269.5 C356.2 270.7 353.1 272.3 350.8 274.5 C348.4 276.6 346.5 279.3 345.2 282.2 C343.8 285.1 343.0 288.5 342.6 292.0 C342.3 295.5 342.7 299.5 343.0 303.3 C343.4 307.0 343.8 310.8 344.5 314.5 C345.2 318.3 346.8 323.9 347.3 325.8Z"/>
<path fill="#bcdcae" stroke-width=".9" d="M339.5 293.4 C340.0 293.2 342.0 290.4 342.6 292.0 C343.2 293.7 342.7 299.5 343.0 303.3 C343.4 307.0 343.8 310.8 344.5 314.5 C345.2 318.3 348.8 323.9 347.3 325.8 C345.7 327.7 337.1 327.9 335.3 325.8 C333.5 323.7 336.0 317.1 336.4 313.1 C336.9 309.1 337.6 305.2 338.1 301.9 C338.6 298.6 339.3 294.8 339.5 293.4Z"/>
<path d="M337.0 300.5 L342.3 299.8 M337.4 306.8 L343.2 306.1 M337.8 313.1 L344.0 312.4 M338.3 319.5 L344.9 318.8 M338.7 325.8 L345.7 325.1" fill="none" stroke-width=".7"/>
<path fill="#2a6c22" d="M295.9 270.2 L283.3 282.2 L287.8 283.9 L289.9 294.1 L293.1 306.1 L299.5 305.5 L306.5 309.9 L313.1 305.5 L312.1 296.3 L312.1 285.0 L304.4 279.7Z"/>
<path d="M295.9 270.2 L305.8 307.5 M304.4 280.1 L298.8 305.4 M312.1 285.0 L293.1 306.1 M287.8 283.9 L298.0 280.8" fill="none" stroke="#1c4a16" stroke-width=".7"/>
</g>
<circle cx="389.5" cy="275.9" r=".7" fill="#18240f"/>
<g fill="none" stroke="#1d2d3d" stroke-width="1"><path d="M366.3 306.8 C362.0 311.7 357.1 318.8 353.6 325.1"/><path d="M395.7 242 C393.4 248.4 401.8 256 398.8 266.8"/></g>
<ellipse cx="355.0" cy="312.0" rx="2.2" ry="4" fill="#a6d25a" stroke="#18240f" stroke-width=".8" transform="rotate(-28 355.0 312.0)"/>
<path d="M354.3 325.1 C357.1 320.9 363.4 321.6 366.3 325.1Z" fill="#c7dc62" stroke="#18240f" stroke-width=".8"/>
<path d="M364.8 296.3 C363.4 301.9 366.3 306.8 371.9 306.4 C377.5 305.8 379.6 300.5 377.5 296.3 C374.7 293.4 367.7 293.2 364.8 296.3Z" fill="#e1334f" stroke="#6e0f22" stroke-width="1"/>
<path d="M365.5 298.4 C368.4 302.6 374.7 302.6 377.5 297.7 M369.1 294.1 C369.1 299.1 374.0 299.8 375.4 295.1" fill="none" stroke="#6e0f22" stroke-width=".8"/>
<path d="M443.1 309 L454.4 300.2 L448.8 316Z" fill="#b451a8" stroke="#2a1a2a" stroke-width="1"/>
<path d="M454.4 300.2 C456.4 304 458 309 460.6 313.4 C463 312.8 466 312.2 468.6 311.6 C468.4 315 467.8 318.6 467 321.8 C464.6 321.6 462.2 321 460 320 C457.4 314 455.6 307 454.4 300.2Z" fill="#e89ccb" stroke="#2a1a2a" stroke-width="1"/>
<circle cx="430.8" cy="323" r="18" fill="#f8bb82" stroke="#2a1a10" stroke-width="1.1"/>
<circle cx="440.5" cy="321.5" r="6.5" fill="#f4806a" opacity=".65"/>
<path d="M443.5 320 V325" stroke="#2a1a10" stroke-width=".9"/>
<path d="M407.4 325 C406.6 321 411.4 320.6 411.4 324" fill="none" stroke="#1c5a6a" stroke-width="1.1"/>
</svg>
<div class="ln" style="left:120px;top:333px;width:463px;height:1px"></div>
<div class="ln" style="left:120px;top:371px;width:463px;height:1px"></div>
<div class="ln" style="left:120px;top:535px;width:463px;height:1px"></div>
<div class="ln" style="left:120px;top:585px;width:463px;height:1px"></div>
<div class="ln" style="left:120px;top:776px;width:463px;height:1px"></div>
<div class="ln" style="left:120px;top:894px;width:463px;height:1px"></div>
<div class="ln" style="left:120px;top:333px;width:1px;height:562px"></div>
<div class="ln" style="left:177px;top:333px;width:1px;height:562px"></div>
<div class="ln" style="left:582px;top:333px;width:1px;height:562px"></div>
<div class="ln" style="left:349px;top:371px;width:1px;height:164px"></div>
<div class="ln" style="left:349px;top:585px;width:1px;height:191px"></div>
<span class="t" style='left:136.15px;top:335px;font-size:10.7px;color:#1a1a1a;transform:scaleX(1.0210);'>8:00h</span>
<span class="t" style='left:133.60px;top:350px;font-size:10.7px;color:#1a1a1a;transform:scaleX(0.9911);'>10:00h</span>
<span class="t" style='left:133.60px;top:388px;font-size:10.7px;color:#1a1a1a;transform:scaleX(0.9911);'>10:00h</span>
<span class="t" style='left:133.60px;top:403px;font-size:10.7px;color:#1a1a1a;transform:scaleX(1.0159);'>11:00h</span>
<span class="t" style='left:133.60px;top:537px;font-size:10.7px;color:#1a1a1a;transform:scaleX(1.0159);'>11:00h</span>
<span class="t" style='left:133.60px;top:552px;font-size:10.7px;color:#1a1a1a;transform:scaleX(1.0159);'>11:30h</span>
<span class="t" style='left:133.60px;top:602px;font-size:10.7px;color:#1a1a1a;transform:scaleX(1.0159);'>11:30h</span>
<span class="t" style='left:133.60px;top:617px;font-size:10.7px;color:#1a1a1a;transform:scaleX(0.9911);'>12:30h</span>
<span class="t" style='left:133.60px;top:793px;font-size:10.7px;color:#1a1a1a;transform:scaleX(0.9911);'>13:00h</span>
<span class="t" style='left:133.60px;top:808px;font-size:10.7px;color:#1a1a1a;transform:scaleX(0.9911);'>13:30h</span>
<span class="t" style='left:358.30px;top:346px;font-size:13.6px;font-weight:bold;color:#000;transform:scaleX(0.7929);'>CLASSE</span>
<span class="t" style='left:207.50px;top:385px;font-size:16px;font-weight:bold;color:#000;transform:scaleX(0.9100);'>1r, 2n i 3r d’ESO</span>
<span class="t" style='left:205.50px;top:418px;font-size:15.4px;color:#1a1a1a;transform:scaleX(0.9921);'>Recital de poesia</span>
<span class="t" style='left:201.80px;top:459px;font-size:15.4px;color:#1a1a1a;transform:scaleX(0.9313);'>LLOC: Sala d’actes</span>
<span class="t" style='left:391.20px;top:385px;font-size:16px;font-weight:bold;color:#000;transform:scaleX(0.8647);'>4t ESO i BATXILLERAT</span>
<div class="bu" style="left:366.3px;top:419px"></div>
<span class="t" style='left:378.60px;top:417px;font-size:9.7px;color:#1a1a1a;transform:scaleX(0.9978);'>Parades de Llibres</span>
<div class="bu" style="left:366.3px;top:432px"></div>
<span class="t" style='left:378.60px;top:430px;font-size:9.7px;color:#1a1a1a;transform:scaleX(1.0501);'>Taller de punts de llibre</span>
<div class="bu" style="left:366.3px;top:446px"></div>
<span class="t" style='left:378.60px;top:444px;font-size:9.7px;color:#1a1a1a;transform:scaleX(1.0381);'>Taller de roses</span>
<div class="bu" style="left:366.3px;top:460px"></div>
<span class="t" style='left:378.60px;top:458px;font-size:9.7px;color:#1a1a1a;transform:scaleX(1.0253);'>Exposició d’escultures poèticoliteràries</span>
<div class="bu" style="left:366.3px;top:473px"></div>
<span class="t" style='left:378.60px;top:471px;font-size:9.7px;color:#1a1a1a;transform:scaleX(0.9932);'>Exposició Concurs de Fotografia</span>
<div class="bu" style="left:366.3px;top:487px"></div>
<span class="t" style='left:378.60px;top:485px;font-size:9.7px;color:#1a1a1a;transform:scaleX(1.0303);'>Projecció d’un audiollibre amb il·lustracions</span>
<span class="t" style='left:378.60px;top:498px;font-size:9.7px;color:#1a1a1a;transform:scaleX(1.0645);'>del Patufet.</span>
<svg style="left:0;top:0" width="1" height="1"><polyline points="478.0,466.8 479.6,468.8 481.2,466.8 482.8,468.8 484.4,466.8 486.0,468.8 487.6,466.8 489.2,468.8 490.8,466.8 492.4,468.8 494.0,466.8 495.6,468.8 497.2,466.8 498.8,468.8 500.4,466.8 502.0,468.8 503.6,466.8 505.2,468.8 506.8,466.8 508.4,468.8 510.0,466.8 511.6,468.8 513.2,466.8 514.8,468.8 516.4,466.8 518.0,468.8 519.6,466.8 521.2,468.8 522.8,466.8 524.4,468.8 526.0,466.8 527.6,468.8 529.2,466.8 530.8,468.8 532.4,466.8 534.0,468.8 535.6,466.8 537.2,468.8 538.8,466.8 540.4,468.8 542.0,466.8 543.6,468.8 545.2,466.8 546.8,468.8 548.4,466.8" fill="none" stroke="#e0241e" stroke-width="1"/></svg>
<span class="t" style='left:354.80px;top:523px;font-size:9.7px;color:#1a1a1a;transform:scaleX(0.9857);'>LLOC: Pati central, vestíbul ciències i aula I007</span>
<span class="t" style='left:350.60px;top:546px;font-size:13.6px;font-weight:bold;color:#000;transform:scaleX(0.8898);'>ESBARJO</span>
<span class="t" style='left:181.10px;top:565px;font-size:10.6px;color:#1a1a1a;transform:scaleX(1.0230);'>Els alumnes de 4t d’ESO vendran pastissets per recollir diners per al viatge a Itàlia</span>
<span class="t" style='left:207.50px;top:599px;font-size:16px;font-weight:bold;color:#000;transform:scaleX(0.9100);'>1r, 2n i 3r d’ESO</span>
<span class="t" style='left:391.20px;top:599px;font-size:16px;font-weight:bold;color:#000;transform:scaleX(0.8647);'>4t ESO i BATXILLERAT</span>
<span class="t" style='left:407.60px;top:632px;font-size:15.4px;color:#1a1a1a;transform:scaleX(0.9887);'>Recital de poesia</span>
<span class="t" style='left:404.20px;top:674px;font-size:15.4px;color:#1a1a1a;transform:scaleX(0.9306);'>LLOC: Sala d’actes</span>
<div class="bu" style="left:193.2px;top:633px"></div>
<span class="t" style='left:205.50px;top:631px;font-size:9.7px;color:#1a1a1a;transform:scaleX(0.9953);'>Parades de Llibres</span>
<div class="bu" style="left:193.2px;top:647px"></div>
<span class="t" style='left:205.50px;top:645px;font-size:9.7px;color:#1a1a1a;transform:scaleX(1.0491);'>Taller de punts de llibre</span>
<div class="bu" style="left:193.2px;top:661px"></div>
<span class="t" style='left:205.50px;top:659px;font-size:9.7px;color:#1a1a1a;transform:scaleX(1.0381);'>Taller de roses</span>
<div class="bu" style="left:193.2px;top:674px"></div>
<span class="t" style='left:205.50px;top:672px;font-size:9.7px;color:#1a1a1a;transform:scaleX(1.0129);'>Exposició d’escultures</span>
<span class="t" style='left:205.50px;top:685px;font-size:9.7px;color:#1a1a1a;transform:scaleX(1.0772);'>poèticoliteràries</span>
<div class="bu" style="left:193.2px;top:700px"></div>
<span class="t" style='left:205.50px;top:698px;font-size:9.7px;color:#1a1a1a;transform:scaleX(0.9961);'>Exposició Concurs de Fotografia</span>
<div class="bu" style="left:193.2px;top:714px"></div>
<span class="t" style='left:205.50px;top:712px;font-size:9.7px;color:#1a1a1a;transform:scaleX(1.0322);'>Projecció d’un audiollibre amb</span>
<span class="t" style='left:205.50px;top:725px;font-size:9.7px;color:#1a1a1a;transform:scaleX(1.0391);'>il·lustracions del Patufet.</span>
<svg style="left:0;top:0" width="1" height="1"><polyline points="205.5,694.3 207.1,696.3 208.7,694.3 210.3,696.3 211.9,694.3 213.5,696.3 215.1,694.3 216.7,696.3 218.3,694.3 219.9,696.3 221.5,694.3 223.1,696.3 224.7,694.3 226.3,696.3 227.9,694.3 229.5,696.3 231.1,694.3 232.7,696.3 234.3,694.3 235.9,696.3 237.5,694.3 239.1,696.3 240.7,694.3 242.3,696.3 243.9,694.3 245.5,696.3 247.1,694.3 248.7,696.3 250.3,694.3 251.9,696.3 253.5,694.3 255.1,696.3 256.7,694.3 258.3,696.3 259.9,694.3 261.5,696.3 263.1,694.3 264.7,696.3 266.3,694.3 267.9,696.3 269.5,694.3 271.1,696.3 272.7,694.3 274.3,696.3 275.9,694.3 277.5,696.3" fill="none" stroke="#e0241e" stroke-width="1"/></svg>
<span class="t" style='left:181.10px;top:751px;font-size:9.7px;color:#1a1a1a;transform:scaleX(0.9935);'>LLOC: Pati central, vestíbul ciències i</span>
<span class="t" style='left:181.10px;top:763px;font-size:9.7px;color:#1a1a1a;transform:scaleX(1.0285);'>aula I007</span>
<div class="ln" style="left:181.2px;top:749.4px;width:1.7px;height:12.2px"></div>
<span class="t" style='left:181.50px;top:790px;font-size:15.4px;font-weight:bold;color:#000;transform:scaleX(0.9484);'>Lliurament de premis dels següents concursos:</span>
<div class="bu" style="left:194.2px;top:814.6px;width:4.2px;height:4.2px"></div>
<span class="t" style='left:205.50px;top:812px;font-size:10.7px;color:#1a1a1a;transform:scaleX(1.0036);'>XXXVIè Certamen literari</span>
<div class="bu" style="left:194.2px;top:829.6px;width:4.2px;height:4.2px"></div>
<span class="t" style='left:205.50px;top:827px;font-size:10.7px;color:#1a1a1a;transform:scaleX(1.0096);'>II Concurs de Fotografia</span>
<div class="bu" style="left:194.2px;top:843.6px;width:4.2px;height:4.2px"></div>
<span class="t" style='left:205.50px;top:841px;font-size:10.7px;color:#1a1a1a;transform:scaleX(1.0165);'>1r Concurs d’aforismes</span>
<svg style="left:0;top:0" width="1" height="1"><polyline points="205.5,822.0 207.1,824.0 208.7,822.0 210.3,824.0 211.9,822.0 213.5,824.0 215.1,822.0 216.7,824.0 218.3,822.0 219.9,824.0 221.5,822.0 223.1,824.0 224.7,822.0 226.3,824.0 227.9,822.0 229.5,824.0 231.1,822.0 232.7,824.0 234.3,822.0 235.9,824.0 237.5,822.0" fill="none" stroke="#e0241e" stroke-width="1"/></svg>
<span class="t" style='left:181.50px;top:872px;font-size:10.7px;color:#1a1a1a;transform:scaleX(0.9393);'>LLOC: Sala d’actes</span>
<div class="a" style="left:1258px;top:138px;width:5px;height:834px;background:linear-gradient(90deg,rgba(120,124,132,0),rgba(120,124,132,.18))"></div>
<div class="a" style="left:1263px;top:138px;width:17px;height:834px;background:linear-gradient(90deg,#d3d6dc 0,#e0e3e9 40%,#e4e6ec 100%)"></div>
<div class="a" style="left:1263px;top:138px;width:17px;height:28px;background:linear-gradient(#b9bdc4 0,#d4d7dd 4px,#dcdfe4 100%)"></div>
<div class="a" style="left:1263px;top:903px;width:17px;height:69px;background:#dfe1e5"></div>
<svg style="left:0;top:0" width="1" height="1">
<rect x="1267" y="143.2" width="9" height="1.4" fill="#6d7178"/>
<path d="M1265.5 151 H1268 V149.5 H1271 V151 H1276.5 V158.5 H1274 V160.5 H1270.5 V158.5 H1265.5Z" fill="#f4f5f7" stroke="#555a63" stroke-width="1"/>
<path d="M1267.5 152 L1269.5 154 L1271.5 152 M1271 157 L1272.6 155 L1274.2 157" fill="none" stroke="#555a63" stroke-width=".9"/>
<rect x="1264" y="164" width="16" height="1" fill="#c3c6cc"/>
<path d="M1267 175 L1271.5 170.4 L1276 175Z" fill="#7c8087"/>
<path d="M1267 910.4 L1276 910.4 L1271.5 915Z" fill="#7c8087"/>
<rect x="1264" y="920" width="16" height="1" fill="#c9ccd1"/>
<path d="M1269 927.4 L1271.5 924.4 L1274 927.4Z M1268.6 931 L1271.5 927.6 L1274.4 931Z" fill="#3a3d44"/>
<circle cx="1271.5" cy="945.5" r="3.1" fill="#c9ccd2" stroke="#5d6169" stroke-width=".9"/>
<path d="M1268.6 960 L1274.4 960 L1271.5 963.4Z M1269 963.6 L1274 963.6 L1271.5 966.6Z" fill="#3a3d44"/>
</svg>
<div class="a" style="left:0;top:972px;width:1280px;height:22px;background:linear-gradient(#f4f5f7 0,#e4e7eb 2px,#d9dce1 50%,#cbcfd5 100%);border-top:1px solid #83878e"></div>
<div class="a" style="left:89px;top:974px;width:2px;height:19px;background:linear-gradient(90deg,#8d9198 50%,#f2f3f5 50%)"></div>
<div class="a" style="left:175px;top:974px;width:2px;height:19px;background:linear-gradient(90deg,#8d9198 50%,#f2f3f5 50%)"></div>
<div class="a" style="left:376px;top:974px;width:2px;height:19px;background:linear-gradient(90deg,#8d9198 50%,#f2f3f5 50%)"></div>
<div class="a" style="left:1001.5px;top:974px;width:2px;height:19px;background:linear-gradient(90deg,#8d9198 50%,#f2f3f5 50%)"></div>
<span class="t" style='left:8.60px;top:978px;font-size:11.2px;color:#303030;transform:scaleX(0.9758);'>Página: 1 de 1</span>
<span class="t" style='left:99.50px;top:978px;font-size:11.2px;color:#303030;transform:scaleX(0.9503);'>Palabras: 149</span>
<span class="t" style='left:217.75px;top:978px;font-size:11.2px;color:#303030;transform:scaleX(0.9741);'>Catalán</span>
<span class="t" style='left:1109.60px;top:978px;font-size:11.2px;color:#303030;transform:scaleX(0.9101);'>50%</span>
<svg style="left:0;top:0" width="1" height="1">
<path d="M185 984.5 L192 979.5 L199 983 L192 988.5Z" fill="#f2f4f8" stroke="#5c6d90" stroke-width=".9"/><path d="M185 984.5 V986.5 L192 990.5 L199 985 V983" fill="#c9d3e6" stroke="#5c6d90" stroke-width=".8"/>
<path d="M190.5 977 L198 984 M198 977 L190.5 984" stroke="#e23a2a" stroke-width="1.7"/>
<rect x="1007.5" y="974.5" width="18" height="18" rx="2" fill="#fcd873" stroke="#e0a52e"/>
<rect x="1011.5" y="978.5" width="10" height="10.5" fill="#fff" stroke="#3a3a3a" stroke-width=".9"/><path d="M1013 981.5H1020M1013 984H1020M1013 986.5H1020" stroke="#3a3a3a" stroke-width=".9"/>
<g fill="#f7f8fa" stroke="#4a4d55" stroke-width=".9"><path d="M1030 979 C1032 978 1034 978 1035.2 979.4 C1036.4 978 1038.4 978 1040.4 979 V988 C1038.4 987.2 1036.4 987.2 1035.2 988.6 C1034 987.2 1032 987.2 1030 988Z"/><path d="M1035.2 979.4 V988.6"/>
<rect x="1047.5" y="978.5" width="9" height="8"/></g>
<path d="M1049 981H1055M1049 983.5H1055" stroke="#4a4d55" stroke-width=".8"/><circle cx="1056.8" cy="987.4" r="2.7" fill="#3f9a58" stroke="#2a6a3a" stroke-width=".6"/>
<g stroke="#4a4d55" stroke-width="1"><path d="M1067 979.5H1076M1070 982.5H1076M1072 985.5H1076M1070 988.5H1076"/><path d="M1085.5 979.5H1095.5M1085.5 982.5H1095.5M1085.5 985.5H1095.5M1085.5 988.5H1095.5"/></g>
<rect x="1160" y="982.6" width="101" height="1" fill="#7f838a"/><rect x="1160" y="983.6" width="101" height="1" fill="#f2f3f5"/><rect x="1209" y="979" width="1" height="8" fill="#7f838a"/>
<g fill="#f4f5f7" stroke="#5e626a" stroke-width="1"><circle cx="1152" cy="983" r="7.2"/><circle cx="1268" cy="983" r="7.2"/></g>
<path d="M1148.4 983 H1155.6 M1264.4 983 H1271.6 M1268 979.4 V986.6" stroke="#33363c" stroke-width="1.7"/>
<path d="M1181.8 976.5 H1188.8 V984.5 L1185.3 988.6 L1181.8 984.5Z" fill="#f1f2f5" stroke="#595d65" stroke-width=".9"/>
</svg>
<div class="a" style="left:0;top:994px;width:1280px;height:30px;background:linear-gradient(#3b82ef 0,#2c6be6 2px,#2560e0 5px,#2660df 50%,#2258d4 85%,#1b48b4 100%)"></div>
<div class="a" style="left:0;top:994px;width:101px;height:30px;border-radius:0 10px 12px 0/0 14px 16px 0;background:linear-gradient(#5aa85a 0,#3d9a3f 3px,#38923a 40%,#368e38 70%,#2d7a2f 100%);box-shadow:inset 0 2px 3px rgba(200,240,190,.55),inset -3px -2px 5px rgba(20,70,20,.55),2px 0 3px rgba(10,30,90,.5)"></div>
<svg style="left:9px;top:998px" width="22" height="22" viewBox="0 0 22 22">
<path d="M3.2 3.6 C5.6 2 8 2.2 10 3.6 L8.6 9.6 C6.6 8.4 4.4 8.2 1.8 9.8Z" fill="#e8502a"/>
<path d="M11.2 4 C13.4 5.2 15.8 5.2 18.6 3.6 L17 9.8 C14.4 11.2 12 11 9.8 10Z" fill="#7cc240"/>
<path d="M1.4 11.2 C4 9.6 6.2 9.8 8.2 11 L6.8 17 C4.8 15.8 2.6 15.6 0 17.2Z" fill="#3a7ae0"/>
<path d="M9.4 11.4 C11.6 12.6 14 12.6 16.6 11.2 L15.2 17.2 C12.6 18.6 10.2 18.4 8 17.4Z" fill="#f4c020"/></svg>
<span class="t" style='left:35.50px;top:1001px;font-size:17.6px;font-weight:bold;font-style:italic;color:#fff;text-shadow:1px 1px 1px rgba(20,50,20,.7);transform:scaleX(0.9230);'>Inicia</span>
<div class="a" style="left:113px;top:997.5px;width:157.5px;height:23.5px;border-radius:3px;background:linear-gradient(#5a9af8 0,#3f84f4 3px,#3a7ef0 60%,#3476e6 100%);box-shadow:inset 0 1px 0 rgba(160,200,255,.6),inset -1px -1px 1px rgba(10,40,140,.5)"></div>
<div class="a" style="left:273px;top:997.5px;width:158px;height:23.5px;border-radius:3px;background:linear-gradient(#5a9af8 0,#3f84f4 3px,#3a7ef0 60%,#3476e6 100%);box-shadow:inset 0 1px 0 rgba(160,200,255,.6),inset -1px -1px 1px rgba(10,40,140,.5)"></div>
<div class="a" style="left:432.5px;top:997.5px;width:159.5px;height:23.5px;border-radius:3px;background:linear-gradient(#1d4db6 0,#1f52c0 30%,#2156c6 100%);box-shadow:inset 1px 1px 2px rgba(0,10,60,.6),inset -1px -1px 0 rgba(70,120,230,.5)"></div>
<svg style="left:0;top:0" width="1" height="1">
<circle cx="131" cy="1009" r="6.2" fill="#e8453c"/><path d="M131 1009 L125.6 1012.1 A6.2 6.2 0 0 0 134.1 1014.4Z" fill="#34a853"/><path d="M131 1009 L134.1 1014.4 A6.2 6.2 0 0 0 136.4 1005.9 L131 1005.9Z" fill="#fbbc05"/><circle cx="131" cy="1009" r="2.9" fill="#fff"/><circle cx="131" cy="1009" r="2.2" fill="#4285f4"/>
<path d="M282.5 1004 H288 L289.5 1005.6 H296.5 V1014.6 H282.5Z" fill="#e9c14c" stroke="#a8841e" stroke-width=".8"/><path d="M282.5 1014.6 L284.6 1007.6 H298 L296.5 1014.6Z" fill="#fbe28a" stroke="#a8841e" stroke-width=".8"/>
<rect x="444.5" y="1002.5" width="13.5" height="13.5" rx="1" fill="#f4f8fe" stroke="#2a5db0"/><text x="451.2" y="1013.4" font-size="10.5" font-weight="bold" text-anchor="middle" font-family="Liberation Sans,sans-serif" fill="#1f5bb5">W</text>
<circle cx="1187" cy="1009.4" r="8.6" fill="#2f7df0" stroke="#9cc6ff" stroke-width="1"/><path d="M1189 1005.2 L1184.8 1009.4 L1189 1013.6" fill="none" stroke="#fff" stroke-width="2"/>
<path d="M1201 1004.2 C1203 1004.6 1204.6 1004 1206 1003 C1207.4 1004 1209 1004.6 1211 1004.2 C1211.4 1009.6 1209.6 1013.4 1206 1015.4 C1202.4 1013.4 1200.6 1009.6 1201 1004.2Z" fill="#d9dde0" stroke="#8a8f94" stroke-width=".8"/><path d="M1206 1004.6 V1014.2 M1202 1009 H1210" stroke="#c0504a" stroke-width="1.2"/>
<path d="M1218 1003 L1220 1002 L1229 1012 L1230 1015.4 L1226.8 1013.6Z" fill="#e8d45a" stroke="#6a6230" stroke-width=".8"/><path d="M1217 1002 L1221 1004.4" stroke="#e8eef6" stroke-width="2"/>
</svg>
<div class="a" style="left:1187px;top:994px;width:93px;height:30px;background:linear-gradient(#1aa0f4 0,#1290ea 3px,#0f8be8 50%,#0f84dc 85%,#0b6cc0 100%);box-shadow:inset 1px 0 0 #0a3c9a,inset 2px 0 1px rgba(120,200,255,.5)"></div>
<svg style="left:0;top:0" width="1" height="1">
<circle cx="1187" cy="1009.4" r="8.6" fill="#2f7df0" stroke="#a9d0ff" stroke-width="1"/><path d="M1189 1005.2 L1184.8 1009.4 L1189 1013.6" fill="none" stroke="#fff" stroke-width="2"/>
<path d="M1201 1004.2 C1203 1004.6 1204.6 1004 1206 1003 C1207.4 1004 1209 1004.6 1211 1004.2 C1211.4 1009.6 1209.6 1013.4 1206 1015.4 C1202.4 1013.4 1200.6 1009.6 1201 1004.2Z" fill="#dfe2e4" stroke="#8a8f94" stroke-width=".8"/><path d="M1206 1005 V1013.6 M1202.4 1008.6 H1209.6" stroke="#d06a50" stroke-width="1.2"/>
<path d="M1219 1003.4 L1221 1002.4 L1229 1011.6 L1230 1015 L1226.8 1013.2Z" fill="#e8d45a" stroke="#5a5428" stroke-width=".8"/><path d="M1217.4 1001.6 L1221 1004" stroke="#eef2f8" stroke-width="2.2"/>
</svg>
<span class="t" style='left:141.60px;top:1004px;font-size:11.2px;color:#fff;transform:scaleX(0.9961);'>Afegeix un article no...</span>
<span class="t" style='left:302.00px;top:1004px;font-size:11.2px;color:#fff;transform:scaleX(0.8678);'>COMISSIÓ FESTES</span>
<span class="t" style='left:462.50px;top:1004px;font-size:11.2px;color:#fff;transform:scaleX(0.9849);'>cartell sant jordi - Mic...</span>
<span class="t" style='left:1152.70px;top:1005px;font-size:11.2px;color:#fff;transform:scaleX(0.8729);'>CA</span>
<span class="t" style='left:1239.20px;top:1005px;font-size:11.2px;color:#fff;transform:scaleX(0.9719);'>13:28</span>
</div>
</body>
</html>
